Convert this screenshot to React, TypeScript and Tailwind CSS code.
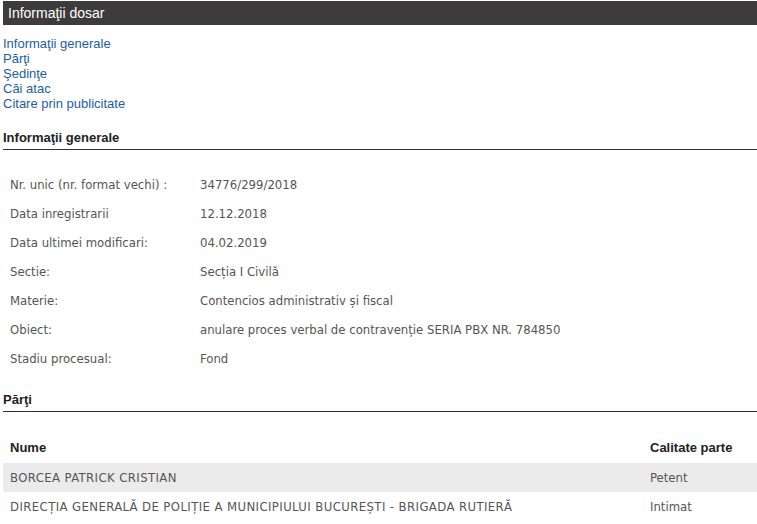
const links = ["Informaţii generale", "Părţi", "Şedinţe", "Căi atac", "Citare prin publicitate"];

const info: [string, string][] = [
  ["Nr. unic (nr. format vechi) :", "34776/299/2018"],
  ["Data inregistrarii", "12.12.2018"],
  ["Data ultimei modificari:", "04.02.2019"],
  ["Sectie:", "Secția I Civilă"],
  ["Materie:", "Contencios administrativ și fiscal"],
  ["Obiect:", "anulare proces verbal de contravenție SERIA PBX NR. 784850"],
  ["Stadiu procesual:", "Fond"],
];

const parti: [string, string][] = [
  ["BORCEA PATRICK CRISTIAN", "Petent"],
  ["DIRECȚIA GENERALĂ DE POLIȚIE A MUNICIPIULUI BUCUREȘTI - BRIGADA RUTIERĂ", "Intimat"],
];

const tahoma = "font-['DejaVu_Sans_Condensed','DejaVu_Sans',sans-serif]";

export default function App() {
  return (
    <div className="w-[757px] h-[524px] overflow-hidden bg-white pl-[3px] pt-px font-['Liberation_Sans',Arial,sans-serif]">
      <div className="h-6 bg-[#3d3b3b] pl-[5px] text-[14px] leading-6 text-white">Informaţii dosar</div>

      <nav className="mt-[11px] flex flex-col text-[13px] leading-[15px] text-[#1c5ea6]">
        {links.map((l) => (
          <a key={l} href="#">{l}</a>
        ))}
      </nav>

      <h2 className="mt-[19px] border-b border-[#333] pb-[4px] text-[13px] font-bold leading-[15px] text-[#222]">
        Informaţii generale
      </h2>

      <table className={`mt-[20px] w-full text-[13px] leading-[15px] text-[#555] ${tahoma}`}>
        <tbody>
          {info.map(([k, v]) => (
            <tr key={k}>
              <td className="w-[197px] py-[7px] pl-[7px]">{k}</td>
              <td className="py-[7px]">{v}</td>
            </tr>
          ))}
        </tbody>
      </table>

      <h2 className="mt-[19px] border-b border-[#333] pb-[4px] text-[13px] font-bold leading-[15px] text-[#222]">
        Părţi
      </h2>

      <table className="mt-[21px] w-full text-[13px] leading-[15px]">
        <thead>
          <tr className="text-[#222]">
            <th className="pt-[7px] pb-[8px] pl-[7px] text-left font-bold">Nume</th>
            <th className="w-[107px] pt-[7px] pb-[8px] text-left font-bold">Calitate parte</th>
          </tr>
        </thead>
        <tbody className={`text-[#555] ${tahoma}`}>
          {parti.map(([n, c], i) => (
            <tr key={n} className={i % 2 === 0 ? "bg-[#ebebeb]" : ""}>
              <td className="py-[7px] pl-[7px] tracking-[0.4px]">{n}</td>
              <td className="py-[7px]">{c}</td>
            </tr>
          ))}
        </tbody>
      </table>
    </div>
  );
}
